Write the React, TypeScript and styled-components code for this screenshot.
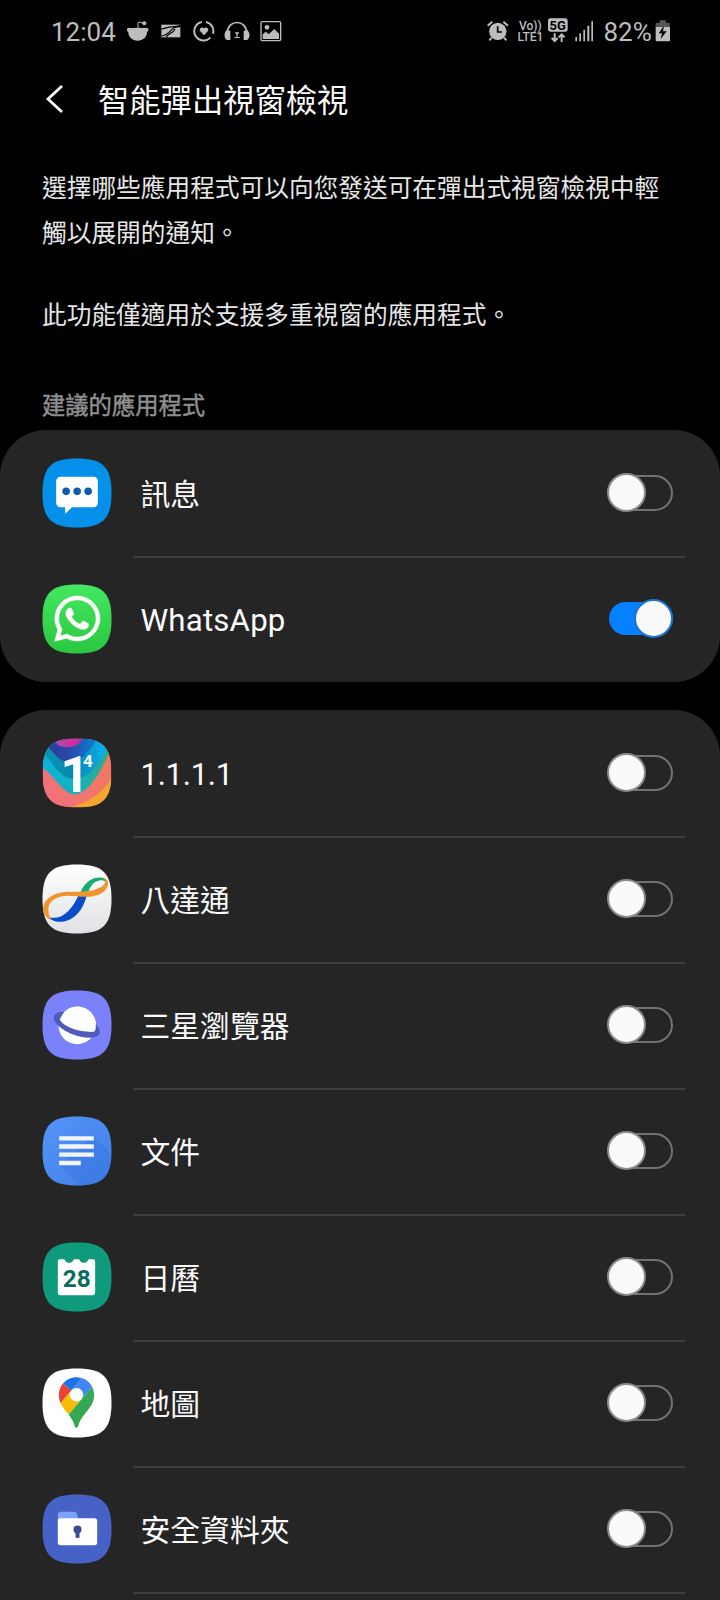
import React, { useState } from "react";
import styled, { createGlobalStyle } from "styled-components";
import { FaWhatsapp } from "react-icons/fa";

const GlobalStyle = createGlobalStyle`
  * {
    box-sizing: border-box;
  }
  body {
    margin: 0;
    background: #000;
    font-family: Roboto, "Noto Sans CJK TC", sans-serif;
  }
  h1, h2, p {
    margin: 0;
    font-weight: 400;
  }
`;

type AppItem = {
  id: string;
  name: string;
  icon: React.ReactNode;
  enabled?: boolean;
  size?: number;
  spacing?: number;
};

// 앱 아이콘 공통 외곽선 (207 x 207)
const SQUIRCLE =
  "M0 103.5C0 26 26 0 103.5 0S207 26 207 103.5 181 207 103.5 207 0 181 0 103.5Z";
const ICON_BOX = "-1.5 -1.5 210 210";

const MessagesIcon = () => (
  <AppIcon viewBox={ICON_BOX}>
    <path d={SQUIRCLE} fill="#0591ea" />
    <rect x="41" y="55" width="125" height="91" rx="13" fill="#fff" />
    <path d="M68 140V166L91 144Z" fill="#fff" />
    <g fill="#0f5cae">
      <circle cx="71" cy="98.500" r="11.500" />
      <circle cx="104" cy="98.500" r="11.500" />
      <circle cx="137" cy="98.500" r="11.500" />
    </g>
  </AppIcon>
);

const WhatsAppIcon = () => (
  <AppIcon viewBox={ICON_BOX}>
    <defs>
      <linearGradient id="wa" x1="0" y1="0" x2="0" y2="1">
        <stop offset="0" stopColor="#43e860" />
        <stop offset="1" stopColor="#2bc740" />
      </linearGradient>
    </defs>
    <path d={SQUIRCLE} fill="url(#wa)" />
    <FaWhatsapp x="27" y="25" size={155} color="#fff" stroke="#fff" strokeWidth="6" />
  </AppIcon>
);

const WarpIcon = () => (
  <AppIcon viewBox={ICON_BOX}>
    <defs>
      <clipPath id="warpClip">
        <path d={SQUIRCLE} />
      </clipPath>
      <linearGradient id="warpBase" x1="0" y1="1" x2="1" y2="0">
        <stop offset="0" stopColor="#f0707c" />
        <stop offset="1" stopColor="#f37a5c" />
      </linearGradient>
      <linearGradient id="warpOuter">
        <stop offset="0" stopColor="#09b2dc" />
        <stop offset="0.55" stopColor="#18b0b8" />
        <stop offset="1" stopColor="#30ac82" />
      </linearGradient>
      <linearGradient id="warpMid">
        <stop offset="0" stopColor="#0794b4" />
        <stop offset="0.45" stopColor="#0788ae" />
        <stop offset="1" stopColor="#08b4f0" />
      </linearGradient>
      <linearGradient id="warpInner">
        <stop offset="0" stopColor="#2b3a98" />
        <stop offset="0.45" stopColor="#2b48a8" />
        <stop offset="1" stopColor="#0a7fd4" />
      </linearGradient>
      <linearGradient id="warpTop">
        <stop offset="0" stopColor="#b04fb0" />
        <stop offset="1" stopColor="#e01f98" />
      </linearGradient>
    </defs>
    <g clipPath="url(#warpClip)">
      <rect width="207" height="207" fill="url(#warpBase)" />
      <path d="M207 118C190 150 150 190 82 207H207Z" fill="#f3a72f" />
      <path
        d="M0 88C30 106 62 168 98 168C140 166 185 82 207 28V0H0Z"
        fill="url(#warpOuter)"
      />
      <path
        d="M0 44C28 62 48 121 92 121C142 121 168 78 200 22L190 0H0Z"
        fill="url(#warpMid)"
      />
      <path d="M0 12C34 34 44 72 80 70C120 68 140 40 165 0H0Z" fill="url(#warpInner)" />
      <path d="M38 8C50 34 106 32 120 0H40Z" fill="url(#warpTop)" />
    </g>
    <IconText x="54" y="161" size={152} $anchor="start">
      1
      <tspan dx="-20" dy="-76" fontSize="51">
        4
      </tspan>
    </IconText>
  </AppIcon>
);

const OctopusIcon = () => (
  <AppIcon viewBox={ICON_BOX}>
    <defs>
      <linearGradient id="octo" x1="0" y1="0" x2="0" y2="1">
        <stop offset="0" stopColor="#fff" />
        <stop offset="1" stopColor="#dfe1e4" />
      </linearGradient>
    </defs>
    <path d={SQUIRCLE} fill="url(#octo)" />
    <path
      d="M114 84C124 56 148 37 174 39C186 40 194 46 194 56C188 48 180 46 170 48C152 52 142 66 136 88Z"
      fill="#10b070"
    />
    <path
      d="M18 158C60 168 88 136 108 92L132 94C122 138 92 174 50 172C36 171 26 167 18 158Z"
      fill="#084cc8"
    />
    <path
      d="M28 167C6 160 -1 142 3 124C10 96 46 82 76 82C108 82 136 82 160 74C180 68 190 58 188 48C186 42 180 40 174 40C188 38 198 46 197 58C195 80 170 96 138 97C106 98 84 91 62 95C38 99 21 110 18 128C16 144 20 156 28 167Z"
      fill="#ef9530"
    />
  </AppIcon>
);

const InternetIcon = () => (
  <AppIcon viewBox={ICON_BOX}>
    <path d={SQUIRCLE} fill="#7b80fb" />
    <circle cx="104" cy="105" r="56" fill="#fff" />
    <ellipse
      cx="103"
      cy="103"
      rx="73"
      ry="31"
      transform="rotate(21 103 103)"
      fill="#4d5bba"
    />
    <path
      d="M52 88C60 64 80 48 104 48C138 48 162 76 160 104C160 114 159 120 155 124C112 126 66 112 52 88Z"
      fill="#fff"
    />
  </AppIcon>
);

const DocsIcon = () => (
  <AppIcon viewBox={ICON_BOX}>
    <defs>
      <linearGradient id="docs" x1="0" y1="0" x2="1" y2="1">
        <stop offset="0" stopColor="#5595f7" />
        <stop offset="1" stopColor="#3f7fea" />
      </linearGradient>
      <clipPath id="docsClip">
        <path d={SQUIRCLE} />
      </clipPath>
    </defs>
    <path d={SQUIRCLE} fill="url(#docs)" />
    <path
      d="M154 60L207 113V207H112L50 146Z"
      fill="#3a74dc"
      opacity="0.4"
      clipPath="url(#docsClip)"
    />
    <path
      d="M50 59H154V72H50ZM50 83.500H154V96.500H50ZM50 108H154V121H50ZM50 133H115V146H50Z"
      fill="#f0f5ff"
    />
  </AppIcon>
);

const CalendarIcon = () => (
  <AppIcon viewBox={ICON_BOX}>
    <path d={SQUIRCLE} fill="#0f997d" />
    <path
      d="M52 50H65C68 50 68 61 80 61S92 50 95 50H109C112 50 112 61 124 61S136 50 139 50H152Q158 50 158 56V151Q158 158 151 158H53Q46 158 46 151V56Q46 50 52 50Z"
      fill="#fff"
    />
    <IconText x="103" y="134" size={73} color="#0b6b5d">
      28
    </IconText>
  </AppIcon>
);

const MapsIcon = () => (
  <AppIcon viewBox={ICON_BOX}>
    <path d={SQUIRCLE} fill="#fff" />
    <g transform="translate(49 26) scale(1.145)">
      <path
        fill="#1a73e8"
        d="M60.2 2.2C55.8.8 51 0 46.1 0 32 0 19.3 6.4 10.8 16.500l21.800 18.300L60.2 2.2z"
      />
      <path
        fill="#ea4335"
        d="M10.8 16.500C4.100 24.500 0 34.900 0 46.100c0 8.700 1.700 15.700 4.600 22l28-33.300-21.800-18.300z"
      />
      <path
        fill="#4285f4"
        d="M46.200 28.500c9.800 0 17.700 7.900 17.700 17.700 0 4.300-1.600 8.300-4.200 11.400 0 0 13.900-16.600 27.500-32.700-5.600-10.800-15.300-19-27-22.700L32.600 34.800c3.300-3.800 8.100-6.300 13.600-6.300"
      />
      <path
        fill="#fbbc04"
        d="M46.200 63.800c-9.800 0-17.700-7.900-17.700-17.700 0-4.300 1.500-8.300 4.100-11.300l-28 33.300c4.800 10.600 12.800 19.200 21 29.900l34.100-40.500c-3.300 3.900-8.100 6.300-13.500 6.300"
      />
      <path
        fill="#34a853"
        d="M59.100 109.200c15.400-24.100 33.300-35 33.300-63 0-7.700-1.900-14.900-5.200-21.300L25.600 98c2.600 3.400 5.300 7.300 7.900 11.300 9.400 14.500 6.800 23.100 12.800 23.100s3.400-8.700 12.800-23.200"
      />
    </g>
  </AppIcon>
);

const SecureFolderIcon = () => (
  <AppIcon viewBox={ICON_BOX}>
    <path d={SQUIRCLE} fill="#4662c6" />
    <path
      d="M46 84V60Q46 52 54 52H94Q101 52 103 58L108 76V84Z"
      fill="#7ca2f3"
    />
    <rect x="46" y="71" width="118" height="81" rx="8" fill="#fff" />
    <circle cx="105" cy="105" r="12" fill="#3b4a92" />
    <path d="M99 106H111V130H99Z" fill="#3b4a92" />
  </AppIcon>
);

const suggestedApps: AppItem[] = [
  { id: "messages", name: "訊息", icon: <MessagesIcon /> },
  {
    id: "whatsapp",
    name: "WhatsApp",
    icon: <WhatsAppIcon />,
    enabled: true,
    size: 31.2,
    spacing: 0.2,
  },
];

const otherApps: AppItem[] = [
  { id: "warp", name: "1.1.1.1", icon: <WarpIcon />, size: 31, spacing: -0.25 },
  { id: "octopus", name: "八達通", icon: <OctopusIcon /> },
  { id: "internet", name: "三星瀏覽器", icon: <InternetIcon /> },
  { id: "docs", name: "文件", icon: <DocsIcon /> },
  { id: "calendar", name: "日曆", icon: <CalendarIcon /> },
  { id: "maps", name: "地圖", icon: <MapsIcon /> },
  { id: "secure", name: "安全資料夾", icon: <SecureFolderIcon /> },
];

const StatusIcons = () => (
  <StatusBar>
    <Clock>12:04</Clock>
    <NoticeIcons>
      <svg width="24" height="24" viewBox="257 56 72 72">
        <path
          d="M266 82C259 82 257 91 264 95C264 111 276 121 292 121S320 111 320 95C327 91 326 82 318 82C312 84 308 82 292 82S272 84 266 82Z"
          fill="#bdbdbd"
        />
        <path d="M293 82V68Q293 65 296 65L309 68" stroke="#bdbdbd" strokeWidth="3" fill="none" />
        <circle cx="312" cy="69" r="6" fill="#bdbdbd" />
      </svg>
      <FlagIcon width="20" height="24" viewBox="362 56 60 72">
        <rect x="363" y="73" width="57" height="38" fill="#bdbdbd" />
        <path
          d="M363 86C376 84 382 80 396 79C406 78 412 80 420 75M363 107C380 106 388 94 396 86C402 80 410 80 420 79M378 111C384 98 398 100 404 86"
          stroke="#000"
          strokeWidth="3.500"
          fill="none"
        />
      </FlagIcon>
      <svg width="22" height="24" viewBox="459 56 66 72">
        <path
          d="M486 65A28 28 0 1 0 511 112M519 100A28 28 0 0 0 498 65"
          stroke="#bdbdbd"
          strokeWidth="6"
          fill="none"
        />
        <path
          d="M492 105L480 92C476 84 486 77 492 84C498 77 508 84 504 92Z"
          fill="#bdbdbd"
        />
      </svg>
      <svg width="26" height="24" viewBox="553 56 78 72">
        <path
          d="M563 98C563 56 621 56 621 98"
          stroke="#bdbdbd"
          strokeWidth="5"
          fill="none"
        />
        <path
          d="M562 88C552 96 552 114 562 119L572 119V92ZM622 88C632 96 632 114 622 119L612 119V92Z"
          fill="#bdbdbd"
        />
        <path
          d="M585 96H599L592 105ZM590 102H594V109H590ZM584 110H600V113H584Z"
          fill="#bdbdbd"
        />
      </svg>
      <svg width="22" height="24" viewBox="659 56 66 72">
        <rect x="662" y="64" width="59" height="57" rx="4" stroke="#bdbdbd" strokeWidth="4" fill="none" />
        <circle cx="680" cy="81" r="7" fill="#bdbdbd" />
        <path d="M667 116V102L676 94L685 102L702 86L716 100V116Z" fill="#bdbdbd" />
      </svg>
    </NoticeIcons>
    <SystemIcons>
      <svg width="24" height="24" viewBox="49 56 72 72">
        <circle cx="84.500" cy="93" r="26" fill="#bdbdbd" />
        <path
          d="M54 76L68 64M101 64L115 76M66 112L59 120M103 112L110 120"
          stroke="#bdbdbd"
          strokeWidth="6"
          fill="none"
        />
        <path d="M84 78V95H97" stroke="#000" strokeWidth="5" fill="none" />
      </svg>
      <VoLte>
        <span>Vo))</span>
        <span>LTE1</span>
      </VoLte>
      <svg width="20" height="26" viewBox="235 53 60 78">
        <rect x="235" y="54" width="59" height="40" rx="7" fill="#bdbdbd" />
        <text
          x="264"
          y="88"
          textAnchor="middle"
          fontFamily="Roboto"
          fontWeight="700"
          fontSize="39"
          fill="#000"
        >
          5G
        </text>
        <path
          d="M255 99V122M246 113L255 122L264 113M276 125V103M267 111L276 102L285 111"
          stroke="#bdbdbd"
          strokeWidth="6"
          fill="none"
        />
      </svg>
      <svg width="19" height="24" viewBox="317 56 57 72">
        <path
          d="M318 110H323V123H318ZM330 99H335V123H330ZM342 88H347V123H342ZM354 76H360V123H354ZM366 63H371V123H366Z"
          fill="#bdbdbd"
        />
      </svg>
      <Battery>82%</Battery>
      <svg width="16" height="24" viewBox="554 56 48 72">
        <path d="M568 60H587V68H598V83H556V68H568Z" fill="#555" />
        <path d="M556 80H599V120Q599 123 596 123H559Q556 123 556 120Z" fill="#bdbdbd" />
        <path d="M581 76L565 99H575L571 116L589 93H578Z" fill="#000" />
      </svg>
    </SystemIcons>
  </StatusBar>
);

type AppListProps = {
  items: AppItem[];
  enabled: Record<string, boolean>;
  onToggle: (id: string) => void;
};

const AppList = ({ items, enabled, onToggle }: AppListProps) => (
  <Card>
    {items.map((item, index) => (
      <React.Fragment key={item.id}>
        {index > 0 && <Divider />}
        <Row>
          {item.icon}
          <Label $size={item.size} $spacing={item.spacing}>
            {item.name}
          </Label>
          <Switch
            role="switch"
            aria-checked={!!enabled[item.id]}
            onClick={() => onToggle(item.id)}
          >
            <Track $on={!!enabled[item.id]} />
            <Knob $on={!!enabled[item.id]} />
          </Switch>
        </Row>
      </React.Fragment>
    ))}
  </Card>
);

const App = () => {
  const [enabled, setEnabled] = useState<Record<string, boolean>>(() =>
    Object.fromEntries([...suggestedApps, ...otherApps].map((a) => [a.id, !!a.enabled]))
  );

  const handleToggle = (id: string) => {
    setEnabled((prev) => ({ ...prev, [id]: !prev[id] }));
  };

  return (
    <Screen>
      <GlobalStyle />
      <StatusIcons />
      <Header>
        <svg width="20" height="32" viewBox="0 0 20 32">
          <path d="M17 3L3 16L17 29" stroke="#fafafa" strokeWidth="2.800" fill="none" />
        </svg>
        <h1>智能彈出視窗檢視</h1>
      </Header>
      <Description>
        <p>選擇哪些應用程式可以向您發送可在彈出式視窗檢視中輕觸以展開的通知。</p>
        <p>此功能僅適用於支援多重視窗的應用程式。</p>
      </Description>
      <SectionTitle>建議的應用程式</SectionTitle>
      <AppList items={suggestedApps} enabled={enabled} onToggle={handleToggle} />
      <AppList
        items={[...otherApps, { id: "next", name: "", icon: null }]}
        enabled={enabled}
        onToggle={handleToggle}
      />
    </Screen>
  );
};

export default App;

const Screen = styled.main`
  display: flex;
  flex-direction: column;
  width: 720px;
  height: 1600px;
  overflow: hidden;
  background: #000;
  color: #fafafa;
`;

const StatusBar = styled.div`
  display: flex;
  align-items: center;
  flex: none;
  height: 62px;
  padding: 0 49.300px 0 51px;
`;
const StatusText = styled.span`
  font-size: 26px;
  line-height: 30px;
  color: #bdbdbd;
  padding-top: 1px;
`;
const Clock = styled(StatusText)`
  width: 65px;
`;
const Battery = styled(StatusText)`
  margin: 0 -4px 0 2px;
`;
const NoticeIcons = styled.div`
  display: flex;
  align-items: center;
  margin-left: 9.700px;
  gap: 9.300px;
`;
const FlagIcon = styled.svg`
  margin: 0 3px 0 1.700px;
`;
const SystemIcons = styled.div`
  display: flex;
  align-items: center;
  margin-left: auto;
  gap: 7px;
`;
const VoLte = styled.div`
  display: flex;
  flex-direction: column;
  align-items: center;
  width: 26px;
  margin-right: -2px;
  padding-top: 2px;
  color: #bdbdbd;
  font-size: 12px;
  font-weight: 500;
  line-height: 11.500px;
`;

const Header = styled.header`
  display: flex;
  align-items: center;
  flex: none;
  height: 74px;
  padding-left: 45px;
  gap: 33px;
  h1 {
    padding-top: 5px;
    font-size: 31.300px;
    line-height: 40px;
  }
`;

const Description = styled.div`
  flex: none;
  height: 203px;
  padding: 31px 42px 0;
  color: #e6e6e6;
  font-size: 24.700px;
  line-height: 44.500px;
  p + p {
    margin-top: 38px;
  }
  p {
    width: 620px;
  }
`;

const SectionTitle = styled.h2`
  display: flex;
  align-items: center;
  flex: none;
  height: 50px;
  margin-top: 40px;
  margin-bottom: 1px;
  padding-left: 42px;
  color: #8f8f8f;
  font-size: 23.300px;
  -webkit-text-stroke: 0.5px #8f8f8f;
`;

const Card = styled.section`
  flex: none;
  background: #252525;
  border-radius: 46px;
  & + & {
    margin-top: 28px;
  }
`;
const Row = styled.div`
  display: flex;
  align-items: center;
  height: 126px;
  padding: 0 47.500px 0 42px;
`;
const Divider = styled.div`
  height: 2px;
  margin: 0 35px -2px 132.500px;
  background: #3e3e3e;
`;
const AppIcon = styled.svg`
  flex: none;
  width: 70px;
  height: 70px;
`;
const IconText = styled.text<{ size: number; color?: string; $anchor?: string }>`
  font-family: Roboto, sans-serif;
  font-size: ${(p) => p.size}px;
  font-weight: 700;
  text-anchor: ${(p) => p.$anchor || "middle"};
  fill: ${(p) => p.color || "#fff"};
`;
const Label = styled.span<{ $size?: number; $spacing?: number }>`
  flex: 1;
  margin-left: 28.500px;
  padding-top: 4px;
  font-size: ${(p) => p.$size || 29.8}px;
  line-height: 40px;
  letter-spacing: ${(p) => p.$spacing || 0}px;
`;

const Switch = styled.button`
  position: relative;
  display: flex;
  align-items: center;
  justify-content: flex-end;
  width: 66px;
  height: 40px;
  margin-bottom: 1px;
  padding: 0;
  border: none;
  background: none;
`;
const Track = styled.span<{ $on: boolean }>`
  width: 64px;
  height: ${(p) => (p.$on ? 33 : 36)}px;
  border: ${(p) => (p.$on ? "none" : "2px solid #727272")};
  border-radius: 18px;
  background: ${(p) => (p.$on ? "#0580ff" : "transparent")};
`;
const Knob = styled.span<{ $on: boolean }>`
  position: absolute;
  top: 0.500px;
  left: ${(p) => (p.$on ? 27.4 : 0.4)}px;
  width: 39px;
  height: 39px;
  border: 2px solid ${(p) => (p.$on ? "#1974d6" : "#8a8a8a")};
  border-radius: 50%;
  background: #fafafa;
`;
